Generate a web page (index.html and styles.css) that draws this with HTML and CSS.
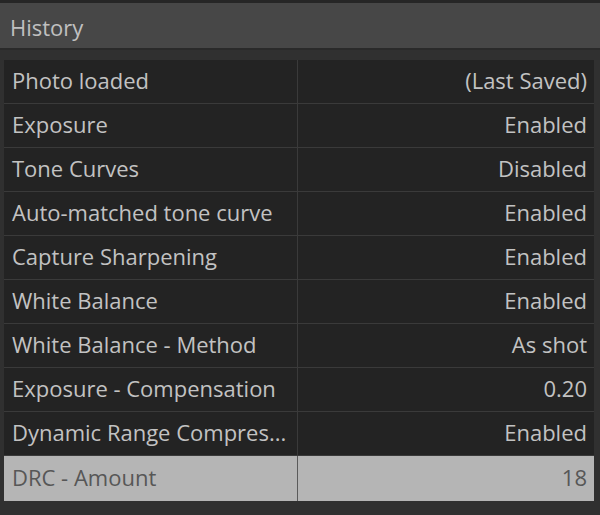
FILE: index.html
```html
<!DOCTYPE html>
<html>
<head>
<meta charset="utf-8">
<link rel="stylesheet" href="styles.css">
</head>
<body>
<div class="panel">
  <div class="header">History</div>
  <div class="body">
    <div class="table">
      <div class="row"><div class="c1">Photo loaded</div><div class="c2">(Last Saved)</div></div>
      <div class="row"><div class="c1">Exposure</div><div class="c2">Enabled</div></div>
      <div class="row"><div class="c1">Tone Curves</div><div class="c2">Disabled</div></div>
      <div class="row"><div class="c1">Auto-matched tone curve</div><div class="c2">Enabled</div></div>
      <div class="row"><div class="c1">Capture Sharpening</div><div class="c2">Enabled</div></div>
      <div class="row"><div class="c1">White Balance</div><div class="c2">Enabled</div></div>
      <div class="row"><div class="c1">White Balance - Method</div><div class="c2">As shot</div></div>
      <div class="row"><div class="c1">Exposure - Compensation</div><div class="c2">0.20</div></div>
      <div class="row"><div class="c1">Dynamic Range Compres...</div><div class="c2">Enabled</div></div>
      <div class="row sel"><div class="c1">DRC - Amount</div><div class="c2">18</div></div>
    </div>
  </div>
</div>
</body>
</html>
```
FILE: styles.css
```css
html, body {
  margin: 0;
  padding: 0;
  background: #2c2c2c;
  font-family: "Open Sans", "Noto Sans", sans-serif;
  font-size: 22px;
  color: #c2c2c2;
}
.panel {
  width: 600px;
  height: 515px;
  overflow: hidden;
  border-top: 3px solid #262626;
  box-sizing: border-box;
}
.header {
  height: 47px;
  background: #474747;
  display: flex;
  align-items: center;
  padding-left: 10px;
  padding-top: 2px;
  color: #c0c0c0;
  border-bottom: 2px solid #2a2a2a;
  box-sizing: border-box;
}
.body {
  background: #303030;
  padding: 10px 6px 0 4px;
  height: 465px;
  box-sizing: border-box;
}
.table {
  background: #232323;
  display: flex;
  flex-direction: column;
}
.row {
  display: grid;
  grid-template-columns: 294px 1fr;
  height: 44px;
  border-bottom: 1px solid #3a3a3a;
  box-sizing: border-box;
}
.c1, .c2 {
  display: flex;
  align-items: center;
  white-space: nowrap;
  overflow: hidden;
  padding-bottom: 3px;
}
.c1 {
  padding-left: 8px;
  border-right: 1px solid #3a3a3a;
}
.c2 {
  justify-content: flex-end;
  padding-right: 7px;
}
.row.sel {
  background: #b5b5b5;
  color: #575757;
  height: 45px;
  border-bottom: none;
}
.row.sel .c1 {
  border-right: 1px solid #5a5a5a;
}
```
